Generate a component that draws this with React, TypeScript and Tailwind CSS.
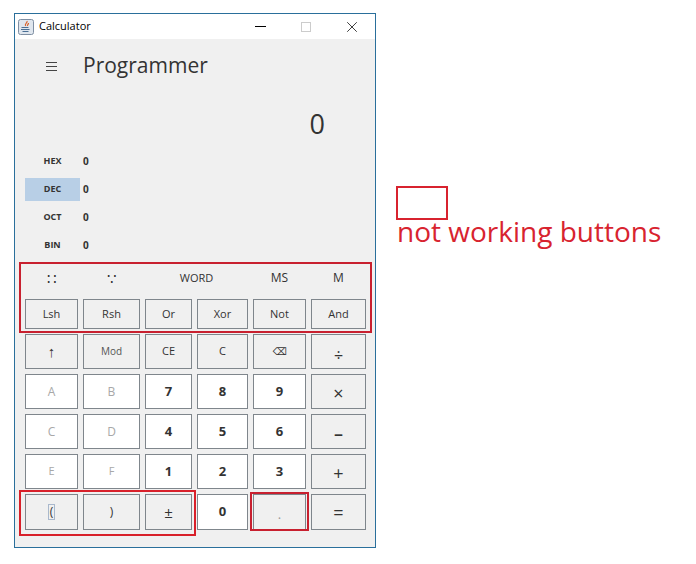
import React from "react"
import { X } from "lucide-react"

const FONT = "font-['Open_Sans','Noto_Sans',sans-serif]"

const CELL = "flex items-center justify-center border border-[#7f868c] text-[#333]"

const keyRows: { h: string; keys: { label: React.ReactNode; cls: string }[] }[] = [
  {
    h: "h-[30px]",
    keys: [
      { label: "Lsh", cls: "bg-[#f0f0f0] text-[11px]" },
      { label: "Rsh", cls: "bg-[#f0f0f0] text-[11px]" },
      { label: "Or", cls: "bg-[#f0f0f0] text-[11px]" },
      { label: "Xor", cls: "bg-[#f0f0f0] text-[11px]" },
      { label: "Not", cls: "bg-[#f0f0f0] text-[11px]" },
      { label: "And", cls: "bg-[#f0f0f0] text-[11px]" },
    ],
  },
  {
    h: "h-[35px]",
    keys: [
      { label: "↑", cls: "bg-[#f0f0f0] text-[15px] font-bold" },
      { label: <span className="text-[#555]">Mod</span>, cls: "bg-[#f0f0f0] text-[10px]" },
      { label: "CE", cls: "bg-[#f0f0f0] text-[11px]" },
      { label: "C", cls: "bg-[#f0f0f0] text-[11px]" },
      { label: "⌫", cls: "bg-[#f0f0f0] text-[10px] font-['DejaVu_Sans']" },
      { label: <span className="mt-[6px]">÷</span>, cls: "bg-[#f0f0f0] text-[16px]" },
    ],
  },
  {
    h: "h-[35px]",
    keys: [
      { label: "A", cls: "bg-white text-[12px] text-[#a8a8a8]" },
      { label: "B", cls: "bg-white text-[12px] text-[#a8a8a8]" },
      { label: "7", cls: "bg-white text-[13px] font-bold" },
      { label: "8", cls: "bg-white text-[13px] font-bold" },
      { label: "9", cls: "bg-white text-[13px] font-bold" },
      { label: <span className="mt-[4px]">×</span>, cls: "bg-[#f0f0f0] text-[18px]" },
    ],
  },
  {
    h: "h-[35px]",
    keys: [
      { label: "C", cls: "bg-white text-[12px] text-[#a8a8a8]" },
      { label: "D", cls: "bg-white text-[12px] text-[#a8a8a8]" },
      { label: "4", cls: "bg-white text-[13px] font-bold" },
      { label: "5", cls: "bg-white text-[13px] font-bold" },
      { label: "6", cls: "bg-white text-[13px] font-bold" },
      { label: <span className="mt-[4px]">–</span>, cls: "bg-[#f0f0f0] text-[18px] font-semibold" },
    ],
  },
  {
    h: "h-[35px]",
    keys: [
      { label: "E", cls: "bg-white text-[11px] text-[#a8a8a8]" },
      { label: "F", cls: "bg-white text-[11px] text-[#a8a8a8]" },
      { label: "1", cls: "bg-white text-[13px] font-bold" },
      { label: "2", cls: "bg-white text-[13px] font-bold" },
      { label: "3", cls: "bg-white text-[13px] font-bold" },
      { label: <span className="mt-[4px]">+</span>, cls: "bg-[#f0f0f0] text-[18px]" },
    ],
  },
  {
    h: "h-[36px]",
    keys: [
      {
        label: <span className="border border-[#a9b8cc] px-[1px] leading-[14px]">(</span>,
        cls: "bg-[#f0f0f0] text-[12px]",
      },
      { label: ")", cls: "bg-[#f0f0f0] text-[12px]" },
      { label: "±", cls: "bg-[#f0f0f0] text-[15px]" },
      { label: "0", cls: "bg-white text-[13px] font-bold" },
      { label: <span className="mt-[6px] text-[#999]">.</span>, cls: "bg-[#f0f0f0] text-[13px]" },
      { label: "=", cls: "bg-[#f0f0f0] text-[18px]" },
    ],
  },
]

const modes = [
  { name: "HEX", active: false },
  { name: "DEC", active: true },
  { name: "OCT", active: false },
  { name: "BIN", active: false },
]

const memoryRow = [
  { label: "∷", cls: "text-[15px]" },
  { label: "∵", cls: "text-[15px]" },
  { label: "WORD", cls: "col-span-2 text-[11px]" },
  { label: "MS", cls: "text-[12px]" },
  { label: "M", cls: "text-[12px]" },
]

export default function App() {
  return (
    <div className={`${FONT} flex h-[564px] w-[696px] items-start bg-white pl-[14px] pt-[13px]`}>
      {/* Java window */}
      <div className="relative flex h-[535px] w-[362px] shrink-0 flex-col border border-[#2a6f9b] bg-[#f0f0f0] text-[#333]">
        <div className="flex h-[25px] shrink-0 items-center bg-white pl-[3px] text-[11px] text-black">
          <svg width="16" height="16" viewBox="0 0 16 16">
            <rect x="0.5" y="0.5" width="15" height="15" rx="2" fill="#dfe6ee" stroke="#7f8fa3" />
            <path d="M9 2c1 1.500-2.500 2.500-1.500 5M10.500 4c0 1.500-1.500 2-1 3" fill="none" stroke="#d9622b" strokeWidth="1.200" />
            <path d="M3.500 8.500h7M3 10.500h8.500M4.500 12.500h6" stroke="#4a6f94" strokeWidth="1" />
          </svg>
          <span className="ml-[5px]">Calculator</span>
          <div className="ml-auto flex items-center">
            <div className="h-px w-[11px] bg-black" />
            <div className="ml-[35px] h-[10px] w-[10px] border border-[#cccccc]" />
            <X className="ml-[32px] mr-[14px] h-[18px] w-[18px]" strokeWidth={1} />
          </div>
        </div>

        <div className="flex h-[52px] shrink-0 items-center pl-[31px]">
          <svg width="12" height="11" viewBox="0 0 12 11" className="mt-[2px]">
            <path d="M0 1.500h11M0 5.500h11M0 9.500h11" stroke="#444" strokeWidth="1" />
          </svg>
          <span className="ml-[25px] text-[21px] leading-none">Programmer</span>
        </div>

        <div className="mt-[11px] flex h-[42px] shrink-0 items-center justify-end pr-[50px] text-[27px] leading-none">
          0
        </div>

        <div className="mt-[3px] flex shrink-0 flex-col pl-[10px]">
          {modes.map((m) => (
            <div key={m.name} className="flex h-[28px] items-center">
              <div
                className={`flex h-[23px] w-[55px] items-center justify-center text-[9px] font-bold ${
                  m.active ? "bg-[#b8cfe6]" : ""
                }`}
              >
                {m.name}
              </div>
              <span className="ml-[3px] text-[10px] font-bold">0</span>
            </div>
          ))}
        </div>

        <div className="mt-[1px] grid grid-cols-[53px_57px_47px_51px_53px_55px] gap-x-[5px] pl-[10px]">
          {memoryRow.map((m) => (
            <div key={m.label} className={`flex h-[36px] items-center justify-center ${m.cls}`}>
              {m.label}
            </div>
          ))}
        </div>

        <div className="mt-[3px] flex flex-col gap-y-[5px] pl-[10px]">
          {keyRows.map((row, i) => (
            <div key={i} className="grid grid-cols-[53px_57px_47px_51px_53px_55px] gap-x-[5px]">
              {row.keys.map((k, j) => (
                <div key={j} className={`${CELL} ${row.h} ${k.cls}`}>
                  {k.label}
                </div>
              ))}
            </div>
          ))}
        </div>

        {/* red annotation boxes drawn over the screenshot */}
        <div className="absolute left-[4px] top-[248px] h-[71px] w-[353px] border-2 border-[#c8202f]" />
        <div className="absolute left-[4px] top-[476px] h-[46px] w-[177px] border-2 border-[#d8202a]" />
        <div className="absolute left-[235px] top-[478px] h-[39px] w-[59px] border-2 border-[#c8202f]" />
      </div>

      {/* legend */}
      <div className="ml-[20px] mt-[173px] flex flex-col items-start">
        <div className="h-[34px] w-[52px] border-2 border-[#d8232f]" />
        <span className="ml-[1px] text-[28px] leading-[22px] whitespace-nowrap text-[#d8232f]">not working buttons</span>
      </div>
    </div>
  )
}
